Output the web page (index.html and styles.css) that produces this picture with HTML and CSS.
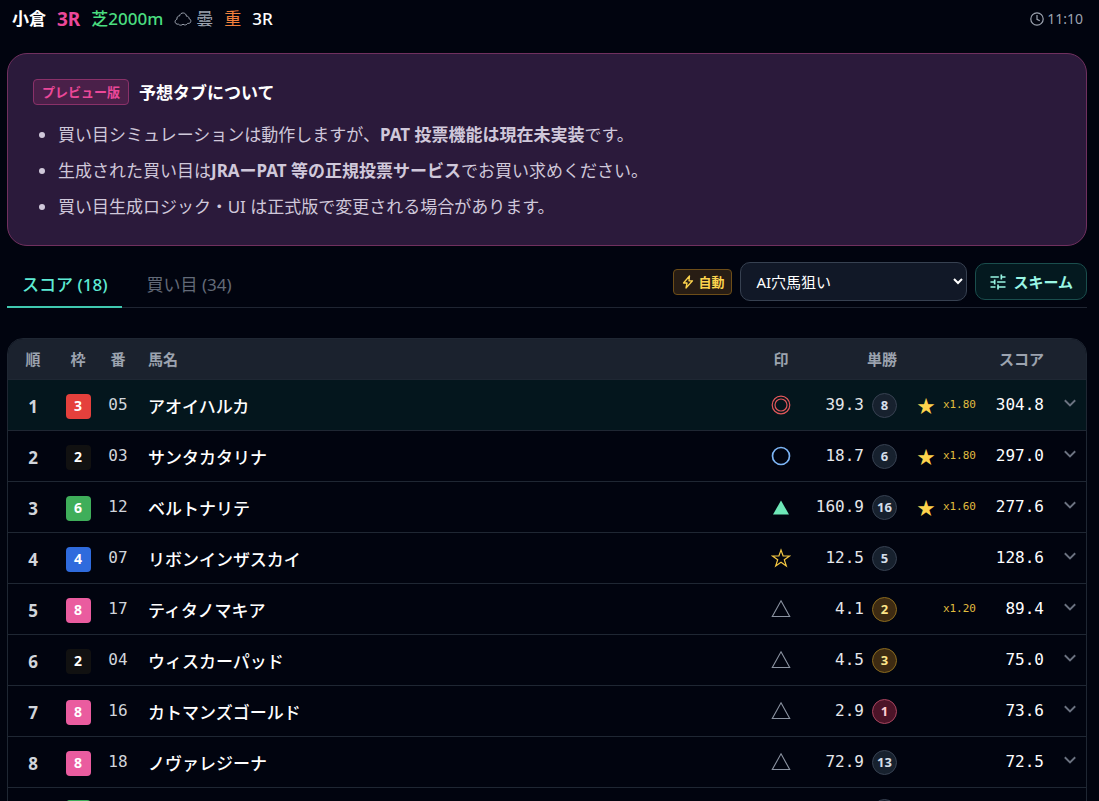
FILE: index.html
```
<!DOCTYPE html>
<html lang="ja">
<head>
  <meta charset="UTF-8">
  <meta name="viewport" content="width=device-width, initial-scale=1.0">
  <title>小倉 3R</title>
  <link rel="stylesheet" href="styles.css">
</head>
<body>
  <svg class="defs" width="0" height="0">
    <symbol id="chevron" viewBox="0 0 12 8"><path d="M0.800 1.300 6 6.400l5.200-5.100" fill="none" stroke="currentColor" stroke-width="1.900"/></symbol>
    <symbol id="double" viewBox="0 0 20 20"><circle cx="10" cy="10" r="8.800"/><circle cx="10" cy="10" r="6"/></symbol>
    <symbol id="circle" viewBox="0 0 20 20"><circle cx="10" cy="10" r="8.500" stroke-width="1.700"/></symbol>
    <symbol id="filled" viewBox="0 0 20 20"><path d="M10 3.500 18 17.500H2z" fill="currentColor" stroke="none"/></symbol>
    <symbol id="triangle" viewBox="0 0 20 20"><path d="M10 1.800 18.700 17.500H1.300z" stroke-width="1.100"/></symbol>
    <symbol id="star" viewBox="0 0 20 20"><path d="M10 2l2.100 6h6.400l-5.200 3.800 2 6.200-5.300-3.800L4.700 18l2-6.200L1.500 8h6.400z"/></symbol>
  </svg>

  <header class="race">
    <span class="place">小倉</span>
    <span class="number">3R</span>
    <span class="course">芝2000m</span>
    <span class="weather">
      <svg width="18" height="16" viewBox="0 0 18 16" fill="none" stroke="currentColor"><path d="M4.500 13.200C2.600 13.500 1 12.300 1.100 10.600 1.200 9.300 2 8.500 3 8.300 2.600 6.300 3.800 4.800 5.500 5 6 2.900 7.600 1.800 9.400 2c1.900.2 2.900 1.500 3 3.200 1.600-.1 2.800 1 2.600 2.500 1.300.3 2 1.400 1.800 2.700-.2 1.500-1.500 2.300-3 1.900-1 1.700-3.400 2.200-4.800.9-1.200 1.300-3.500 1.300-4.500 0z"/></svg>
      曇
    </span>
    <span class="going">重</span>
    <span class="title">3R</span>
    <time class="clock">
      <svg width="14" height="14" viewBox="0 0 14 14" fill="none" stroke="currentColor" stroke-width="1.200"><circle cx="7" cy="7" r="6.200"/><path d="M7 3v4.300l2.800 1.500"/></svg>
      11:10
    </time>
  </header>

  <main>
    <section class="notice">
      <div class="notice-head">
        <span class="preview">プレビュー版</span>
        <h1>予想タブについて</h1>
      </div>
      <ul>
        <li>買い目シミュレーションは動作しますが、<strong>PAT 投票機能は現在未実装</strong>です。</li>
        <li>生成された買い目は<strong>JRAーPAT 等の正規投票サービス</strong>でお買い求めください。</li>
        <li>買い目生成ロジック・UI は正式版で変更される場合があります。</li>
      </ul>
    </section>

    <div class="toolbar">
      <nav class="tabs">
        <button type="button" class="tab active">スコア (18)</button>
        <button type="button" class="tab">買い目 (34)</button>
      </nav>
      <div class="controls">
        <span class="auto">
          <svg width="12" height="14" viewBox="0 0 12 14" fill="none" stroke="currentColor" stroke-width="1.300" stroke-linejoin="round"><path d="M7.500 1 1.500 8H5l-1 5 6.500-7.200H7z"/></svg>
          自動
        </span>
        <select class="scheme-select" aria-label="スキーム">
          <option>AI穴馬狙い</option>
        </select>
        <button type="button" class="scheme">
          <svg width="20" height="20" viewBox="0 0 24 24" fill="currentColor"><path d="M3 17v2h6v-2H3zM3 5v2h10V5H3zm10 16v-2h8v-2h-8v-2h-2v6h2zM7 9v2H3v2h4v2h2V9H7zm14 4v-2H11v2h10zm-6-4h2V7h4V5h-4V3h-2v6z"/></svg>
          スキーム
        </button>
      </div>
    </div>

    <div class="table-wrap">
      <table>
        <thead>
          <tr>
            <th class="c-rank">順</th>
            <th class="c-frame">枠</th>
            <th class="c-num">番</th>
            <th class="c-name">馬名</th>
            <th class="c-mark">印</th>
            <th class="c-odds">単勝</th>
            <th class="c-boost"></th>
            <th class="c-score">スコア</th>
            <th class="c-open"></th>
          </tr>
        </thead>
        <tbody>
          <tr class="top">
            <td class="c-rank">1</td>
            <td class="c-frame"><span class="frame f3">3</span></td>
            <td class="c-num">05</td>
            <td class="c-name">アオイハルカ</td>
            <td class="c-mark"><svg class="mark red"><use href="#double"/></svg></td>
            <td class="c-odds"><div class="odds">39.3<span class="pop">8</span></div></td>
            <td class="c-boost"><div class="boost"><span class="star">★</span>x1.80</div></td>
            <td class="c-score">304.8</td>
            <td class="c-open"><svg class="chevron"><use href="#chevron"/></svg></td>
          </tr>
          <tr>
            <td class="c-rank">2</td>
            <td class="c-frame"><span class="frame f2">2</span></td>
            <td class="c-num">03</td>
            <td class="c-name">サンタカタリナ</td>
            <td class="c-mark"><svg class="mark blue"><use href="#circle"/></svg></td>
            <td class="c-odds"><div class="odds">18.7<span class="pop">6</span></div></td>
            <td class="c-boost"><div class="boost"><span class="star">★</span>x1.80</div></td>
            <td class="c-score">297.0</td>
            <td class="c-open"><svg class="chevron"><use href="#chevron"/></svg></td>
          </tr>
          <tr>
            <td class="c-rank">3</td>
            <td class="c-frame"><span class="frame f6">6</span></td>
            <td class="c-num">12</td>
            <td class="c-name">ベルトナリテ</td>
            <td class="c-mark"><svg class="mark green"><use href="#filled"/></svg></td>
            <td class="c-odds"><div class="odds">160.9<span class="pop">16</span></div></td>
            <td class="c-boost"><div class="boost"><span class="star">★</span>x1.60</div></td>
            <td class="c-score">277.6</td>
            <td class="c-open"><svg class="chevron"><use href="#chevron"/></svg></td>
          </tr>
          <tr>
            <td class="c-rank">4</td>
            <td class="c-frame"><span class="frame f4">4</span></td>
            <td class="c-num">07</td>
            <td class="c-name">リボンインザスカイ</td>
            <td class="c-mark"><svg class="mark yellow"><use href="#star"/></svg></td>
            <td class="c-odds"><div class="odds">12.5<span class="pop">5</span></div></td>
            <td class="c-boost"></td>
            <td class="c-score">128.6</td>
            <td class="c-open"><svg class="chevron"><use href="#chevron"/></svg></td>
          </tr>
          <tr>
            <td class="c-rank">5</td>
            <td class="c-frame"><span class="frame f8">8</span></td>
            <td class="c-num">17</td>
            <td class="c-name">ティタノマキア</td>
            <td class="c-mark"><svg class="mark"><use href="#triangle"/></svg></td>
            <td class="c-odds"><div class="odds">4.1<span class="pop high">2</span></div></td>
            <td class="c-boost"><div class="boost">x1.20</div></td>
            <td class="c-score">89.4</td>
            <td class="c-open"><svg class="chevron"><use href="#chevron"/></svg></td>
          </tr>
          <tr>
            <td class="c-rank">6</td>
            <td class="c-frame"><span class="frame f2">2</span></td>
            <td class="c-num">04</td>
            <td class="c-name">ウィスカーパッド</td>
            <td class="c-mark"><svg class="mark"><use href="#triangle"/></svg></td>
            <td class="c-odds"><div class="odds">4.5<span class="pop high">3</span></div></td>
            <td class="c-boost"></td>
            <td class="c-score">75.0</td>
            <td class="c-open"><svg class="chevron"><use href="#chevron"/></svg></td>
          </tr>
          <tr>
            <td class="c-rank">7</td>
            <td class="c-frame"><span class="frame f8">8</span></td>
            <td class="c-num">16</td>
            <td class="c-name">カトマンズゴールド</td>
            <td class="c-mark"><svg class="mark"><use href="#triangle"/></svg></td>
            <td class="c-odds"><div class="odds">2.9<span class="pop first">1</span></div></td>
            <td class="c-boost"></td>
            <td class="c-score">73.6</td>
            <td class="c-open"><svg class="chevron"><use href="#chevron"/></svg></td>
          </tr>
          <tr>
            <td class="c-rank">8</td>
            <td class="c-frame"><span class="frame f8">8</span></td>
            <td class="c-num">18</td>
            <td class="c-name">ノヴァレジーナ</td>
            <td class="c-mark"><svg class="mark"><use href="#triangle"/></svg></td>
            <td class="c-odds"><div class="odds">72.9<span class="pop">13</span></div></td>
            <td class="c-boost"></td>
            <td class="c-score">72.5</td>
            <td class="c-open"><svg class="chevron"><use href="#chevron"/></svg></td>
          </tr>
          <tr class="compact">
            <td class="c-rank"></td>
            <td class="c-frame"><span class="frame f6"></span></td>
            <td class="c-num"></td>
            <td class="c-name"></td>
            <td class="c-mark"></td>
            <td class="c-odds"><div class="odds"><span class="pop"></span></div></td>
            <td class="c-boost"></td>
            <td class="c-score"></td>
            <td class="c-open"></td>
          </tr>
        </tbody>
      </table>
    </div>
  </main>
</body>
</html>
```
FILE: styles.css
```
* {
    box-sizing: border-box;
}

body {
    font-family: "Noto Sans", "Noto Sans CJK JP", sans-serif;
    font-size: 17px;
    line-height: 24px;
    background-color: #01040f;
    color: #fff;
    margin: 0;
    height: 100vh;
    overflow: hidden;
}

button,
select {
    font-family: inherit;
    cursor: pointer;
}

svg {
    flex-shrink: 0;
}

.defs {
    position: absolute;
}

/* race header */
.race {
    display: flex;
    align-items: center;
    gap: 11px;
    height: 38px;
    padding: 0 16px 0 12px;
}

.place,
.number {
    font-weight: bold;
}

.number {
    font-size: 19px;
    color: #ec4899;
}

.course {
    font-weight: 500;
    color: #4ade80;
}

.weather {
    display: flex;
    align-items: center;
    gap: 4px;
    color: #9ca3af;
}

.going {
    color: #f0803c;
}

.title {
    font-weight: 500;
}

.clock {
    display: flex;
    align-items: center;
    gap: 3px;
    margin-left: auto;
    font-size: 14px;
    color: #9ca3af;
}

main {
    padding: 15px 12px 0 7px;
}

/* preview notice */
.notice {
    background-color: #2b1a3b;
    border: 1px solid #70305f;
    border-radius: 20px;
    padding: 25px 25px 24px;
}

.notice-head {
    display: flex;
    align-items: center;
    gap: 10px;
}

.preview {
    background-color: #4a2049;
    border: 1px solid #8a3169;
    border-radius: 4px;
    padding: 0 8px;
    font-size: 13px;
    font-weight: bold;
    color: #ec4899;
}

h1 {
    margin: 0;
    padding-top: 2px;
    font-size: 17px;
    font-weight: bold;
}

.notice ul {
    display: flex;
    flex-direction: column;
    gap: 8px;
    margin: 16px 0 0;
    padding-left: 25px;
    line-height: 28px;
    color: #d0c8da;
}

/* tabs and scheme controls */
.toolbar {
    display: flex;
    justify-content: space-between;
    align-items: flex-end;
    margin-top: 16px;
    border-bottom: 1px solid #1f2532;
}

.tabs {
    display: flex;
    gap: 9px;
}

.tab {
    height: 46px;
    margin-bottom: -1px;
    padding: 0 15px 2px;
    background: none;
    border: none;
    border-bottom: 2px solid transparent;
    font-size: 17px;
    color: #636a78;
}

.tab.active {
    border-color: #40c9b0;
    font-weight: 500;
    color: #5eead4;
}

.controls {
    display: flex;
    align-items: center;
    gap: 8px;
    padding-bottom: 6px;
}

.auto {
    display: flex;
    align-items: center;
    gap: 4px;
    background-color: #281d14;
    border: 1px solid #6d4d18;
    border-radius: 4px;
    padding: 0 7px 0 8px;
    font-size: 13px;
    font-weight: bold;
    color: #fcd34d;
}

.scheme-select {
    width: 227px;
    height: 39px;
    padding: 0 0 0 11px;
    background-color: #111827;
    border: 1px solid #374151;
    border-radius: 10px;
    font-size: 15px;
    color: #fff;
}

.scheme {
    display: flex;
    align-items: center;
    gap: 5px;
    height: 37px;
    padding: 0 13px 0 12px;
    background-color: #04191f;
    border: 1px solid #1a4e4d;
    border-radius: 10px;
    font-size: 15px;
    font-weight: bold;
    color: #99f6e4;
}

/* score table */
.table-wrap {
    margin-top: 30px;
    border: 1px solid #1f2733;
    border-radius: 16px;
    overflow: hidden;
}

table {
    width: 100%;
    table-layout: fixed;
    border-spacing: 0;
}

th,
td {
    padding: 0;
    border-bottom: 1px solid #1f2733;
    text-align: center;
    vertical-align: middle;
}

th {
    height: 41px;
    background-color: #1b222e;
    font-size: 15px;
    color: #9ca3af;
}

td {
    height: 51px;
}

.compact td {
    height: 47px;
}

.top td {
    background-color: #04161d;
}

.c-rank {
    width: 50px;
}

td.c-rank {
    padding-top: 3px;
    font-weight: bold;
    color: #d1d5db;
}

.c-frame,
.c-num {
    width: 40px;
}

.c-name {
    padding-left: 10px;
    text-align: left;
}

td.c-name {
    padding-top: 3px;
    font-weight: 500;
}

.c-mark {
    width: 60px;
}

.c-odds {
    width: 96px;
    padding-right: 10px;
    text-align: right;
}

.c-boost {
    width: 79px;
    padding-right: 10px;
}

.c-score {
    width: 68px;
    padding-right: 10px;
    text-align: right;
}

.c-open {
    width: 32px;
}

td.c-num,
td.c-odds,
td.c-boost,
td.c-score {
    font-family: "DejaVu Sans Mono", monospace;
    font-size: 16px;
}

td.c-num {
    color: #d1d5db;
}

.frame {
    display: flex;
    align-items: center;
    justify-content: center;
    width: 25px;
    height: 25px;
    margin: 2px auto 0;
    border-radius: 4px;
    font-size: 14px;
    font-weight: bold;
}

.f2 {
    background-color: #111;
}

.f3 {
    background-color: #e5403c;
}

.f4 {
    background-color: #2f6bdd;
}

.f6 {
    background-color: #3fae5a;
}

.f8 {
    background-color: #ea5c9f;
}

.mark {
    display: block;
    width: 20px;
    height: 20px;
    margin: 0 auto;
    fill: none;
    stroke: currentColor;
    stroke-width: 1.2;
    color: #8b93a1;
}

.mark.red {
    color: #e0575a;
}

.mark.blue {
    color: #7db5f5;
}

.mark.green {
    color: #6ee7b7;
}

.mark.yellow {
    color: #f5c842;
}

.odds {
    display: flex;
    align-items: center;
    justify-content: flex-end;
    gap: 8px;
    color: #e5e7eb;
}

.pop {
    display: flex;
    align-items: center;
    justify-content: center;
    width: 25px;
    height: 25px;
    background-color: #17212e;
    border: 1px solid #374151;
    border-radius: 50%;
    font-family: "Noto Sans", sans-serif;
    font-size: 13px;
    font-weight: bold;
    color: #d5dfea;
}

.pop.high {
    background-color: #3e2b12;
    border-color: #8a6a1e;
    color: #fde68a;
}

.pop.first {
    background-color: #4c1428;
    border-color: #a8455f;
    color: #fecdd3;
}

.boost {
    display: flex;
    align-items: center;
    justify-content: flex-end;
    gap: 8px;
    font-size: 11px;
    color: #e0bd3f;
}

.star {
    font-family: "Noto Sans CJK JP", sans-serif;
    font-size: 18px;
    color: #fcd34d;
}

.chevron {
    display: block;
    width: 12px;
    height: 8px;
    margin: 0 auto 5px;
    color: #6b7280;
}
```
